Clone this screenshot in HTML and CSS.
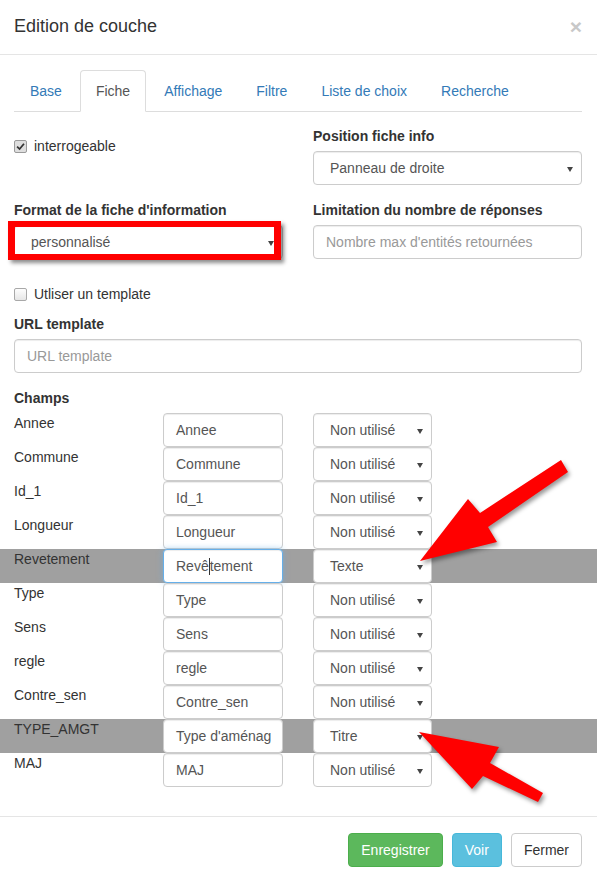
FILE: index.html
```html
<!DOCTYPE html>
<html lang="fr">
<head>
<meta charset="utf-8">
<title>Edition de couche</title>
<link rel="stylesheet" href="styles.css">
</head>
<body>
<div class="modal">
  <div class="modal-header">
    <h4 class="modal-title">Edition de couche</h4>
    <button class="close" type="button">×</button>
  </div>
  <div class="modal-body">
    <ul class="nav-tabs">
      <li><a>Base</a></li>
      <li class="active"><a>Fiche</a></li>
      <li><a>Affichage</a></li>
      <li><a>Filtre</a></li>
      <li><a>Liste de choix</a></li>
      <li><a>Recherche</a></li>
    </ul>
    <div class="tab-content">
      <div class="two-col">
        <div class="col">
          <div class="checkbox"><span class="cb checked"><svg viewBox="0 0 12 12" width="12" height="12"><path d="M2.3 6.2 L5 8.8 L9.8 3" fill="none" stroke="#333" stroke-width="1.9"/></svg></span><span>interrogeable</span></div>
        </div>
        <div class="col">
          <div class="form-group">
            <label class="lbl">Position fiche info</label>
            <div class="select"><span class="sel-text">Panneau de droite</span></div>
          </div>
        </div>
      </div>
      <div class="two-col">
        <div class="col">
          <div class="form-group">
            <label class="lbl">Format de la fiche d'information</label>
            <div class="annotated">
              <div class="select"><span class="sel-text">personnalisé</span></div>
              <div class="red-box"></div>
            </div>
          </div>
        </div>
        <div class="col">
          <div class="form-group">
            <label class="lbl">Limitation du nombre de réponses</label>
            <div class="input placeholder">Nombre max d'entités retournées</div>
          </div>
        </div>
      </div>
      <div class="checkbox"><span class="cb"></span><span>Utliser un template</span></div>
      <div class="form-group">
        <label class="lbl">URL template</label>
        <div class="input placeholder">URL template</div>
      </div>
      <label class="lbl champs">Champs</label>
      <div class="fields">
        <div class="field-row"><span class="fname">Annee</span><div class="input small">Annee</div><div class="select small"><span class="sel-text">Non utilisé</span></div></div>
        <div class="field-row"><span class="fname">Commune</span><div class="input small">Commune</div><div class="select small"><span class="sel-text">Non utilisé</span></div></div>
        <div class="field-row"><span class="fname">Id_1</span><div class="input small">Id_1</div><div class="select small"><span class="sel-text">Non utilisé</span></div></div>
        <div class="field-row"><span class="fname">Longueur</span><div class="input small">Longueur</div><div class="select small"><span class="sel-text">Non utilisé</span></div></div>
        <div class="field-row marked"><span class="fname">Revetement</span><div class="input small focus">Revê<span class="caret"></span>tement</div><div class="select small"><span class="sel-text">Texte</span></div></div>
        <div class="field-row"><span class="fname">Type</span><div class="input small">Type</div><div class="select small"><span class="sel-text">Non utilisé</span></div></div>
        <div class="field-row"><span class="fname">Sens</span><div class="input small">Sens</div><div class="select small"><span class="sel-text">Non utilisé</span></div></div>
        <div class="field-row"><span class="fname">regle</span><div class="input small">regle</div><div class="select small"><span class="sel-text">Non utilisé</span></div></div>
        <div class="field-row"><span class="fname">Contre_sen</span><div class="input small">Contre_sen</div><div class="select small"><span class="sel-text">Non utilisé</span></div></div>
        <div class="field-row marked"><span class="fname">TYPE_AMGT</span><div class="input small">Type d'aménag</div><div class="select small"><span class="sel-text">Titre</span></div></div>
        <div class="field-row"><span class="fname">MAJ</span><div class="input small">MAJ</div><div class="select small"><span class="sel-text">Non utilisé</span></div></div>
      </div>
    </div>
  </div>
  <div class="modal-footer">
    <button class="btn btn-success" type="button">Enregistrer</button>
    <button class="btn btn-info" type="button">Voir</button>
    <button class="btn btn-default" type="button">Fermer</button>
  </div>
  <svg class="arrows" width="597" height="880" viewBox="0 0 597 880">
    <polygon points="420,561 468,499 480,513 561,460 568,472 488,527 497,542" fill="#ff0000"/>
    <polygon points="419,732 499,747 490,763 543,793 538,802 483,776 472,789" fill="#ff0000"/>
  </svg>
</div>
</body>
</html>
```

FILE: styles.css
```css
* { box-sizing: border-box; }
html, body { margin: 0; padding: 0; background: #fff; }
body {
  font-family: "Liberation Sans", Arial, Helvetica, sans-serif;
  font-size: 14px;
  line-height: 20px;
  color: #333;
}
.modal {
  position: relative;
  width: 597px;
  height: 880px;
  overflow: hidden;
  background: #fff;
}
.modal-header {
  display: flex;
  justify-content: space-between;
  align-items: flex-start;
  height: 55px;
  padding: 13px 15px 0 14px;
  border-bottom: 1px solid #e5e5e5;
}
.modal-title {
  margin: 0;
  font-size: 18px;
  font-weight: normal;
  line-height: 26px;
  color: #333;
}
.close {
  margin: 3px 0 0 0;
  padding: 0;
  border: 0;
  background: none;
  font-family: "Liberation Sans", Arial, sans-serif;
  font-size: 21px;
  font-weight: bold;
  line-height: 1;
  color: #c8c8c8;
}
.modal-body {
  padding: 15px 15px 15px 14px;
}
.nav-tabs {
  display: flex;
  list-style: none;
  margin: 0;
  padding: 0;
  border-bottom: 1px solid #ddd;
}
.nav-tabs li {
  margin-bottom: -1px;
}
.nav-tabs a {
  display: block;
  padding: 10px 15px;
  margin-right: 2px;
  line-height: 20px;
  border: 1px solid transparent;
  border-radius: 4px 4px 0 0;
  color: #337ab7;
}
.nav-tabs li.active a {
  color: #555;
  background: #fff;
  border-color: #ddd #ddd transparent;
}
.tab-content {
  padding-top: 14px;
}
.two-col {
  display: grid;
  grid-template-columns: 269px 269px;
  column-gap: 30px;
  align-items: start;
}
.form-group {
  margin-bottom: 15px;
}
.lbl {
  display: block;
  font-weight: bold;
  margin-bottom: 5px;
  line-height: 20px;
}
.checkbox {
  display: flex;
  align-items: center;
  margin: 10px 0;
  height: 20px;
}
.cb {
  width: 13px;
  height: 13px;
  margin-right: 7px;
  border: 1px solid #a8a8a8;
  border-radius: 2px;
  background: linear-gradient(#fdfdfd, #e6e6e6);
  display: inline-flex;
  align-items: center;
  justify-content: center;
}
.cb.checked {
  background: #dedede;
  border-color: #9a9a9a;
}
.cb svg { display: block; width: 11px; height: 11px; }
.input, .select {
  display: block;
  height: 34px;
  padding: 6px 12px;
  border: 1px solid #ccc;
  border-radius: 4px;
  background: #fff;
  color: #555;
  line-height: 20px;
  white-space: nowrap;
  overflow: hidden;
  box-shadow: inset 0 1px 1px rgba(0,0,0,.075);
}
.placeholder { color: #999; }
.select {
  position: relative;
  padding-left: 16px;
}
.select::after {
  content: "";
  position: absolute;
  right: 8px;
  top: 15px;
  border-left: 3px solid transparent;
  border-right: 3px solid transparent;
  border-top: 5px solid #444;
}
.annotated {
  position: relative;
}
.red-box {
  position: absolute;
  left: -6px;
  top: -4px;
  width: 273px;
  height: 39px;
  border-style: solid;
  border-color: #ff0000;
  border-width: 6px 7px 6px 7px;
  box-shadow: 3px 3px 4px rgba(0,0,0,.45);
}
.champs {
  margin-bottom: 5px;
}
.fields {
  margin-bottom: 14px;
}
.field-row {
  display: grid;
  grid-template-columns: 149px 150px 119px;
  height: 34px;
}
.field-row.marked {
  background: #a0a0a0;
  margin: 0 -15px 0 -14px;
  padding: 0 15px 0 14px;
}
.fname {
  line-height: 20px;
  color: #333;
}
.input.small {
  width: 120px;
}
.input.focus {
  border-color: #66afe9;
  box-shadow: inset 0 1px 1px rgba(0,0,0,.075), 0 0 6px rgba(102,175,233,.6);
}
.caret {
  display: inline-block;
  width: 1px;
  height: 17px;
  background: #333;
  vertical-align: -4px;
}
.modal-footer {
  display: flex;
  justify-content: flex-end;
  gap: 9px;
  padding: 16px 15px 15px;
  border-top: 1px solid #e5e5e5;
}
.btn {
  height: 34px;
  padding: 6px 12px;
  font-family: "Liberation Sans", Arial, sans-serif;
  font-size: 14px;
  line-height: 20px;
  border: 1px solid transparent;
  border-radius: 4px;
}
.btn-success { background: #5cb85c; border-color: #4cae4c; color: #fff; }
.btn-info { background: #5bc0de; border-color: #46b8da; color: #fff; }
.btn-default { background: #fff; border-color: #ccc; color: #333; }
.arrows {
  position: absolute;
  left: 0;
  top: 0;
  pointer-events: none;
  filter: drop-shadow(2px 3px 2px rgba(0,0,0,.4));
}
```
